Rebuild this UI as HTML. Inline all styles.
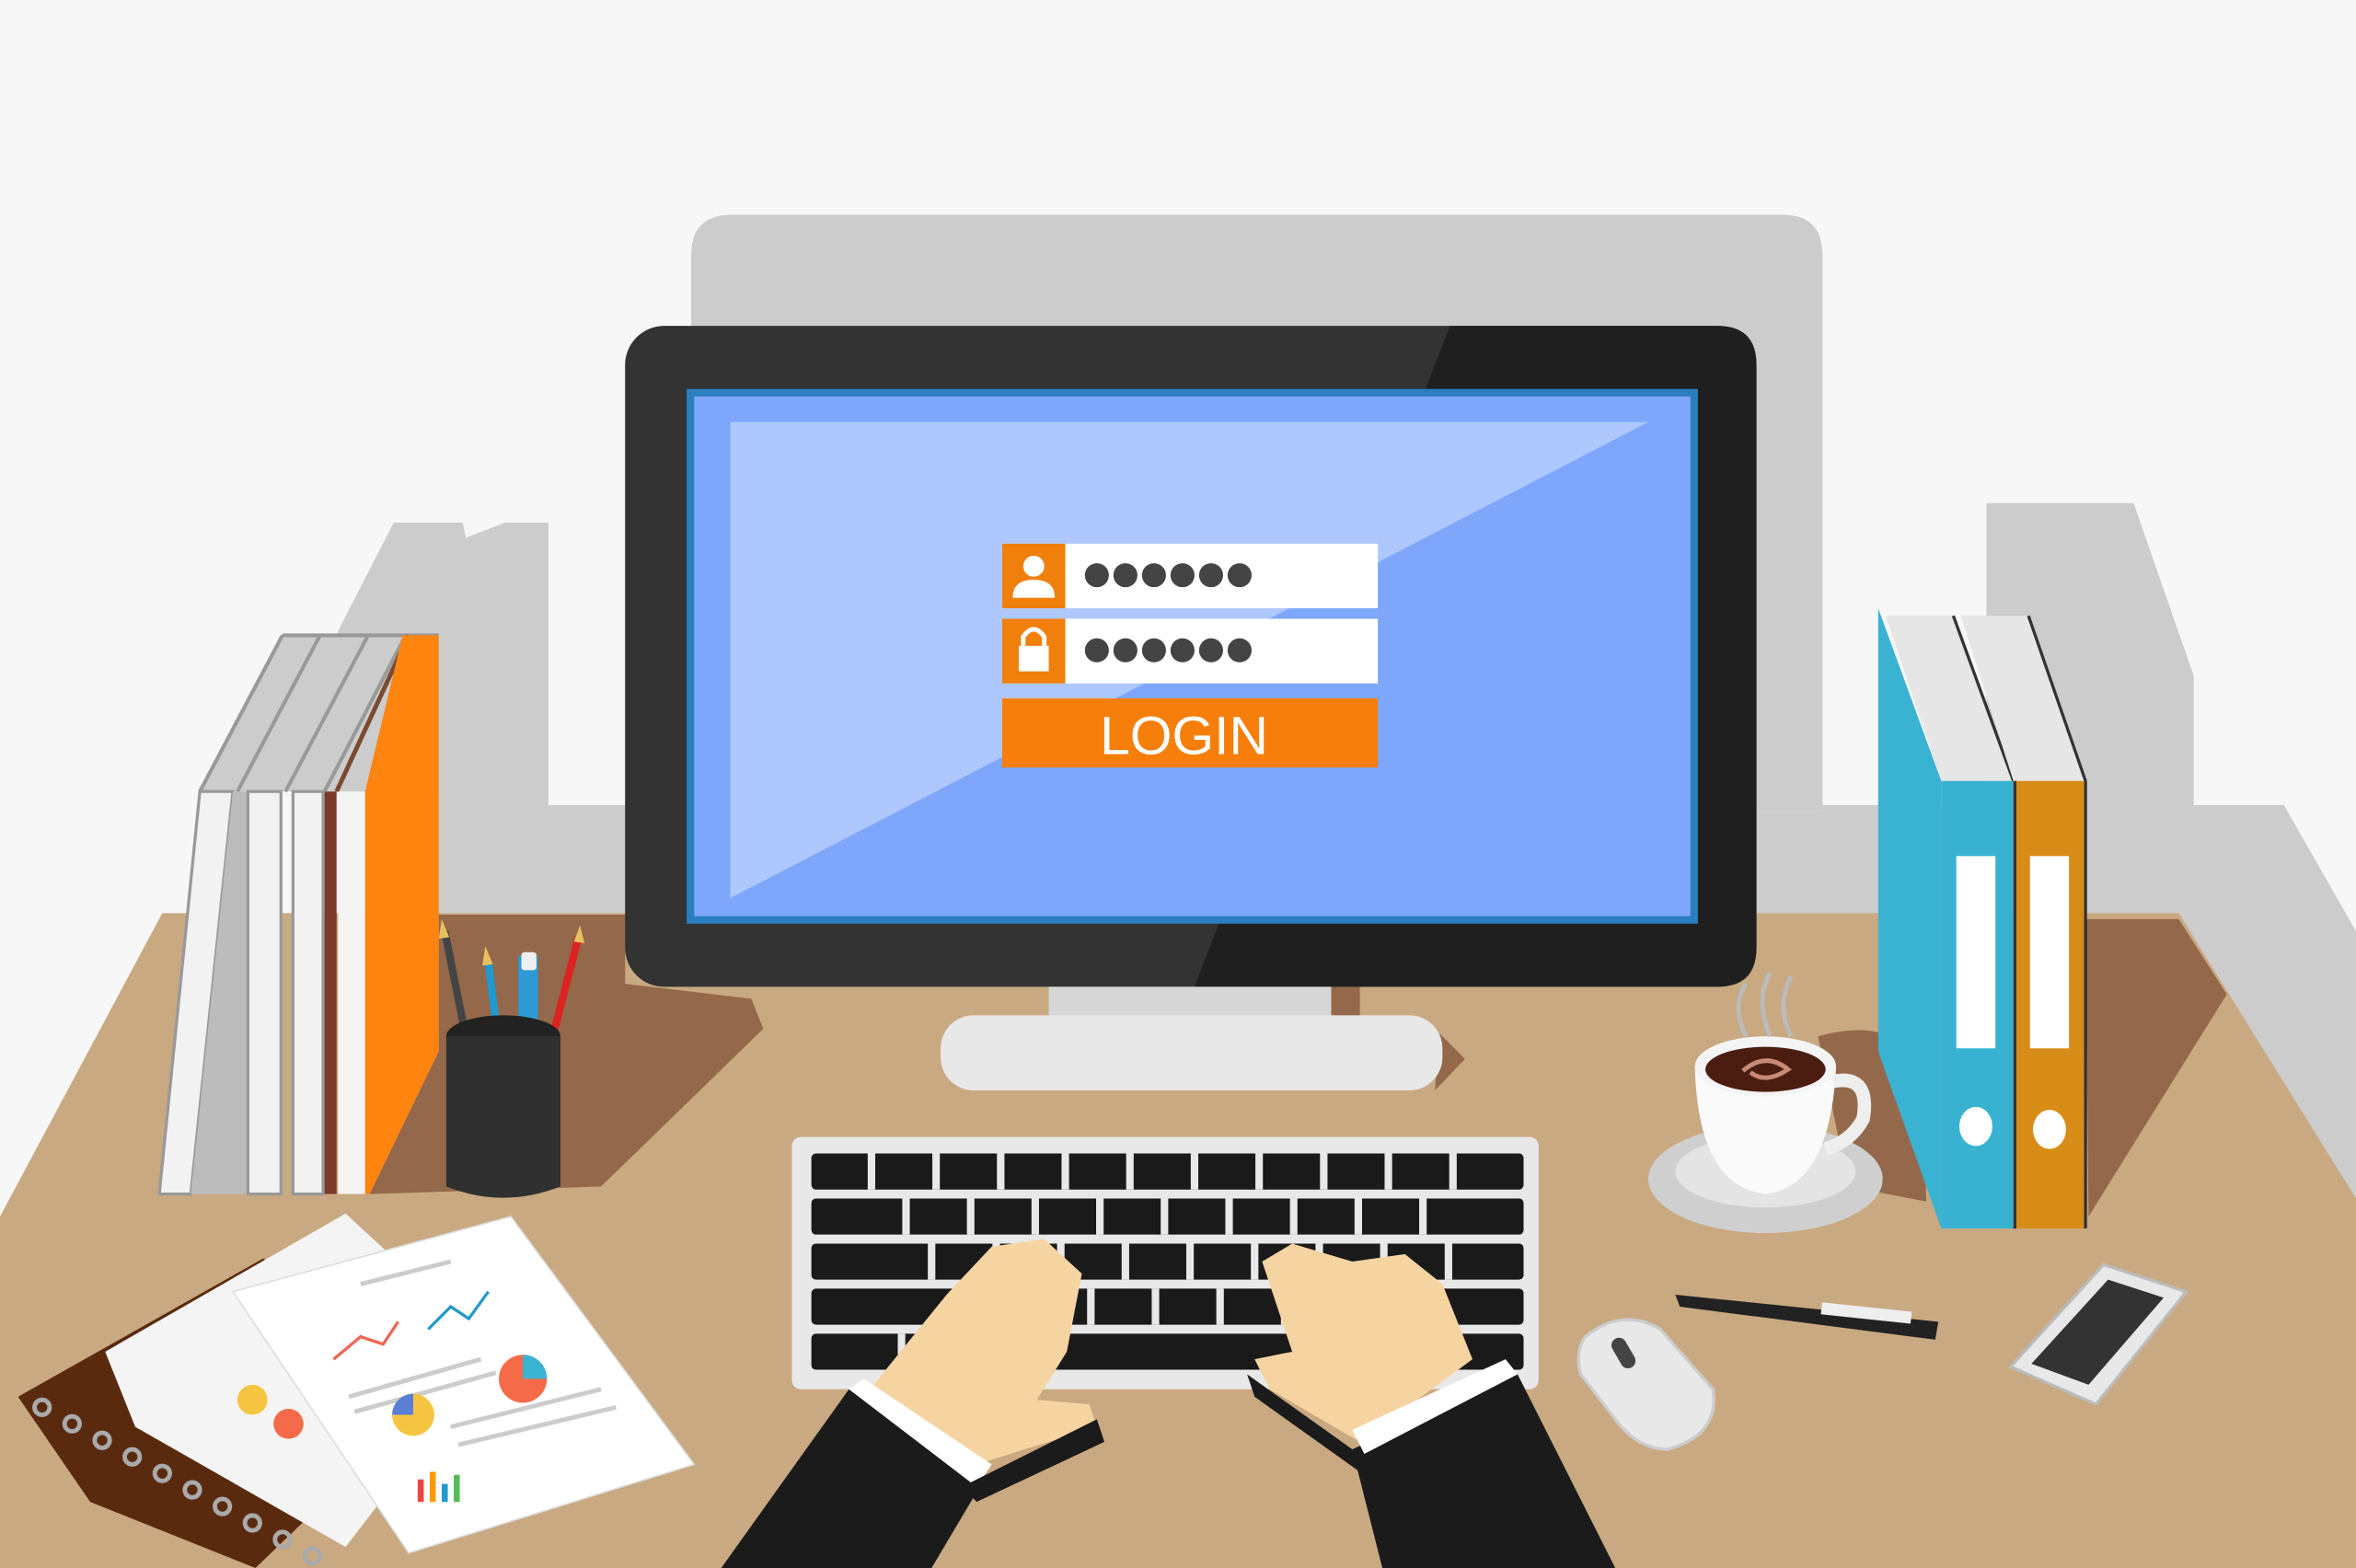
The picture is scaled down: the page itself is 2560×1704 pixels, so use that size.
<!DOCTYPE html>
<html><head><meta charset="utf-8"><style>
html,body{margin:0;padding:0;background:#f7f7f7;overflow:hidden}
svg{display:block}
</style></head><body>
<svg width="2560" height="1704" viewBox="0 0 1568 1044" preserveAspectRatio="none" xmlns="http://www.w3.org/2000/svg">
<rect width="1568" height="1044" fill="#f7f7f7"/>
<!-- wall shapes -->
<path d="M460 170 Q460 143 487 143 L1186 143 Q1213 143 1213 170 L1213 540 L460 540 Z" fill="#cccccc"/>
<path d="M225 420 L262 348 L308 348 L310 358 L336 348 L365 348 L365 536 L416 536 L416 612 L225 612 Z" fill="#cccccc"/>
<path d="M1169 540 L1213 540 L1213 536 L1322 536 L1322 335 L1420 335 L1460 450 L1460 536 L1520 536 L1568 620 L1568 830 L1450 612 L1169 612 Z" fill="#cccccc"/>
<!-- desk -->
<path d="M108 608 L1450 608 L1568 798 L1568 1044 L0 1044 L0 810 Z" fill="#c9a981"/>
<!-- shadows -->
<path d="M292 609 L416 609 L416 655 L500 665 L508 685 L400 790 L246 795 L292 700 Z" fill="#94684a"/>
<path d="M885 657 L905 657 L905 676 L885 676 Z" fill="#94684a"/>
<path d="M958 688 L975 705 L955 726 Z" fill="#94684a"/>
<path d="M1388 612 L1450 612 L1482 662 L1390 810 Z" fill="#94684a"/>
<path d="M1210 690 Q1265 675 1280 715 L1282 800 L1230 790 Z" fill="#94684a"/>
<!-- monitor -->
<rect x="416" y="217" width="753" height="440" rx="26" fill="#333333"/>
<path d="M965 217 L1143 217 Q1169 217 1169 243 L1169 631 Q1169 657 1143 657 L795 657 Z" fill="#1f1f1f"/>
<rect x="457" y="259" width="673" height="356" fill="#2b7fbf"/>
<rect x="462" y="264" width="663" height="346" fill="#7ea7fb"/>
<path d="M486 281 L1097 281 L486 598 Z" fill="#aec8fd"/>
<!-- stand -->
<rect x="698" y="657" width="188" height="22" fill="#d6d6d6"/>
<rect x="626" y="676" width="334" height="50" rx="22" fill="#e8e8e8"/>
<!-- login -->
<rect x="667" y="362" width="250" height="43" fill="#fff"/>
<rect x="667" y="362" width="42" height="43" fill="#f07f0c"/>
<rect x="667" y="412" width="250" height="43" fill="#fff"/>
<rect x="667" y="412" width="42" height="43" fill="#f07f0c"/>
<circle cx="688" cy="377" r="7" fill="#fff"/>
<path d="M674 398 Q674 386 688 386 Q702 386 702 398 Z" fill="#fff"/>
<rect x="678" y="430" width="20" height="17" fill="#fff"/>
<path d="M681 431 L681 424 Q688 414 695 424 L695 431" stroke="#fff" stroke-width="3" fill="none"/>
<g fill="#444">
<circle cx="730" cy="383" r="8"/><circle cx="749" cy="383" r="8"/><circle cx="768" cy="383" r="8"/><circle cx="787" cy="383" r="8"/><circle cx="806" cy="383" r="8"/><circle cx="825" cy="383" r="8"/>
<circle cx="730" cy="433" r="8"/><circle cx="749" cy="433" r="8"/><circle cx="768" cy="433" r="8"/><circle cx="787" cy="433" r="8"/><circle cx="806" cy="433" r="8"/><circle cx="825" cy="433" r="8"/>
</g>
<rect x="667" y="465" width="250" height="46" fill="#f57f0a"/>
<text x="788" y="502" text-anchor="middle" font-family="Liberation Sans, sans-serif" font-size="36" fill="#fff">LOGIN</text>
<!-- left books -->
<path d="M133 527 L188 423 L292 423 L243 527 Z" fill="#cccccc"/>
<g stroke="#999" stroke-width="2.5" fill="none">
<path d="M133 527 L188 423 M158 527 L213 423 M190 527 L245 423 M216 527 L270 423 M188 423 L292 423"/>
</g>
<path d="M224 527 L272 423" stroke="#7a4a30" stroke-width="3"/>
<path d="M133 527 L155 527 L127 795 L106 795 Z" fill="#f2f2f2" stroke="#999" stroke-width="2"/>
<path d="M155 527 L165 527 L165 795 L127 795 Z" fill="#bcbcbc"/>
<rect x="165" y="527" width="22" height="268" fill="#f2f2f2" stroke="#999" stroke-width="2"/>
<rect x="195" y="527" width="20" height="268" fill="#f2f2f2" stroke="#999" stroke-width="2"/>
<rect x="216" y="527" width="8" height="268" fill="#7a3b2a"/>
<rect x="225" y="527" width="18" height="268" fill="#f4f4f4"/>
<path d="M243 527 L268 423 L292 423 L292 700 L246 795 L243 795 Z" fill="#ff8410"/>
<!-- pencil cup -->
<line x1="296" y1="620" x2="312" y2="700" stroke="#444" stroke-width="5"/>
<path d="M294 612 L299 624 L292 625 Z" fill="#e8c060"/>
<line x1="325" y1="640" x2="333" y2="705" stroke="#1e9ad0" stroke-width="5"/>
<path d="M323 630 L328 642 L321 643 Z" fill="#e8c060"/>
<rect x="345" y="636" width="13" height="70" rx="2" fill="#2d9ad6"/>
<rect x="347" y="634" width="10" height="12" rx="2" fill="#eee"/>
<line x1="385" y1="624" x2="364" y2="705" stroke="#d22" stroke-width="5"/>
<path d="M386 616 L389 628 L382 627 Z" fill="#e8c060"/>
<ellipse cx="335" cy="690" rx="38" ry="14" fill="#222"/>
<path d="M297 690 L297 790 Q335 805 373 790 L373 690 Z" fill="#303030"/>
<!-- right binders -->
<path d="M1250 405 L1292 520 L1292 818 L1250 700 Z" fill="#3ab3d2"/>
<path d="M1255 410 L1300 410 L1340 520 L1292 520 Z" fill="#e6e6e6"/>
<path d="M1300 410 L1340 520" stroke="#333" stroke-width="2"/>
<rect x="1292" y="520" width="48" height="298" fill="#39b2d1"/>
<rect x="1302" y="570" width="26" height="128" fill="#fff"/>
<ellipse cx="1315" cy="750" rx="11" ry="13" fill="#fff"/>
<path d="M1305 410 L1350 410 L1388 520 L1340 520 Z" fill="#e6e6e6"/>
<path d="M1350 410 L1388 520 L1388 818" stroke="#333" stroke-width="2" fill="none"/>
<rect x="1340" y="520" width="47" height="298" fill="#d88c18"/>
<line x1="1341" y1="520" x2="1341" y2="818" stroke="#333" stroke-width="2"/>
<rect x="1351" y="570" width="26" height="128" fill="#fff"/>
<ellipse cx="1364" cy="752" rx="11" ry="13" fill="#fff"/>
<!-- coffee -->
<ellipse cx="1175" cy="785" rx="78" ry="36" fill="#cfcfcf"/>
<ellipse cx="1175" cy="780" rx="60" ry="24" fill="#e4e4e4"/>
<path d="M1128 710 Q1130 790 1175 795 Q1218 790 1222 710 Z" fill="#fafafa"/>
<path d="M1220 720 Q1245 715 1240 745 Q1232 760 1215 765" stroke="#eee" stroke-width="9" fill="none"/>
<ellipse cx="1175" cy="710" rx="47" ry="20" fill="#f4f4f4"/>
<ellipse cx="1175" cy="712" rx="40" ry="15" fill="#4a1d10"/>
<path d="M1160 713 Q1175 700 1190 712 Q1175 722 1165 714" stroke="#c78a75" stroke-width="3" fill="none"/>
<path d="M1162 690 Q1152 670 1162 655 M1178 690 Q1168 665 1178 648 M1192 690 Q1182 670 1192 650" stroke="#bbb" stroke-width="3" fill="none"/>
<!-- keyboard -->
<rect x="527" y="757" width="497" height="168" rx="6" fill="#e8e8e8"/>
<g fill="#1a1a1a">
<rect x="540" y="768" width="474" height="24" rx="3"/>
<rect x="540" y="798" width="474" height="24" rx="3"/>
<rect x="540" y="828" width="474" height="24" rx="3"/>
<rect x="540" y="858" width="474" height="24" rx="3"/>
<rect x="540" y="888" width="474" height="24" rx="3"/>
</g>
<g stroke="#e8e8e8" stroke-width="5">
<path d="M580 768V792M623 768V792M666 768V792M709 768V792M752 768V792M795 768V792M838 768V792M881 768V792M924 768V792M967 768V792"/>
<path d="M603 798V822M646 798V822M689 798V822M732 798V822M775 798V822M818 798V822M861 798V822M904 798V822M947 798V822"/>
<path d="M620 828V852M663 828V852M706 828V852M749 828V852M792 828V852M835 828V852M878 828V852M921 828V852M964 828V852"/>
<path d="M640 858V882M683 858V882M726 858V882M769 858V882M812 858V882M855 858V882M898 858V882M941 858V882"/>
<path d="M600 888V912M950 888V912"/>
</g>
<!-- hands -->
<path d="M575 930 L630 862 L660 830 L695 825 L720 848 L710 900 L690 932 L725 935 L730 950 L650 975 L600 945 Z" fill="#f6d4a2"/>
<path d="M480 1044 L565 925 L655 985 L620 1044 Z" fill="#1b1b1b"/>
<path d="M565 925 L575 918 L660 975 L650 990 Z" fill="#fff"/>
<path d="M640 990 L730 945 L735 960 L650 1000 Z" fill="#1b1b1b"/>
<path d="M980 905 L960 855 L935 835 L900 840 L860 828 L840 840 L860 900 L835 905 L845 925 L905 960 Z" fill="#f6d4a2"/>
<path d="M1075 1044 L1010 915 L900 965 L920 1044 Z" fill="#1b1b1b"/>
<path d="M1010 915 L1002 905 L900 952 L908 968 Z" fill="#fff"/>
<path d="M830 915 L900 965 L905 980 L835 930 Z" fill="#1b1b1b"/>
<!-- mouse -->
<path d="M1055 890 Q1080 870 1105 885 L1140 925 Q1145 955 1110 965 Q1090 965 1075 945 L1052 915 Q1048 900 1055 890 Z" fill="#e8e8e8" stroke="#ccc" stroke-width="2"/>
<rect x="1075" y="890" width="10" height="22" rx="5" fill="#444" transform="rotate(-30 1080 900)"/>
<!-- pen -->
<path d="M1115 862 L1290 880 L1288 892 L1118 870 Z" fill="#222"/>
<rect x="1212" y="870" width="60" height="8" fill="#eee" transform="rotate(6 1240 875)"/>
<!-- phone -->
<path d="M1338 910 L1400 842 L1455 860 L1395 935 Z" fill="#e8e8e8" stroke="#bbb" stroke-width="2"/>
<path d="M1352 908 L1403 852 L1440 864 L1390 922 Z" fill="#333"/>
<!-- papers -->
<path d="M12 930 L175 838 L320 900 L170 1044 L60 1000 Z" fill="#5a2a0f"/>
<path d="M70 900 L230 808 L330 900 L230 1030 L90 950 Z" fill="#f4f4f4"/>
<path d="M155 860 L340 810 L462 975 L272 1034 Z" fill="#fff" stroke="#ddd" stroke-width="1"/>
<g stroke="#ccc" stroke-width="3">
<line x1="232" y1="930" x2="320" y2="905"/><line x1="236" y1="940" x2="330" y2="914"/>
<line x1="300" y1="950" x2="400" y2="925"/><line x1="305" y1="962" x2="410" y2="937"/>
<line x1="240" y1="855" x2="300" y2="840"/>
</g>
<path d="M222 905 L240 890 L255 895 L265 880" stroke="#e65" stroke-width="2" fill="none"/>
<path d="M285 885 L300 870 L312 878 L325 860" stroke="#29c" stroke-width="2" fill="none"/>
<circle cx="348" cy="918" r="16" fill="#f56b4a"/><path d="M348 918 L348 902 A16 16 0 0 1 364 918 Z" fill="#3ab3d2"/>
<circle cx="275" cy="942" r="14" fill="#f5c542"/><path d="M275 942 L275 928 A14 14 0 0 0 261 942 Z" fill="#5b7ed6"/>
<circle cx="168" cy="932" r="10" fill="#f5c542"/><circle cx="192" cy="948" r="10" fill="#f56b4a"/>
<g stroke-width="4"><line x1="280" y1="1000" x2="280" y2="985" stroke="#e44"/><line x1="288" y1="1000" x2="288" y2="980" stroke="#f90"/><line x1="296" y1="1000" x2="296" y2="988" stroke="#29c"/><line x1="304" y1="1000" x2="304" y2="982" stroke="#5b5"/></g>
<g fill="none" stroke="#aaa" stroke-width="3">
<circle cx="28" cy="937" r="5"/><circle cx="48" cy="948" r="5"/><circle cx="68" cy="959" r="5"/><circle cx="88" cy="970" r="5"/><circle cx="108" cy="981" r="5"/><circle cx="128" cy="992" r="5"/><circle cx="148" cy="1003" r="5"/><circle cx="168" cy="1014" r="5"/><circle cx="188" cy="1025" r="5"/><circle cx="208" cy="1036" r="5"/>
</g>
</svg>
</body></html>
